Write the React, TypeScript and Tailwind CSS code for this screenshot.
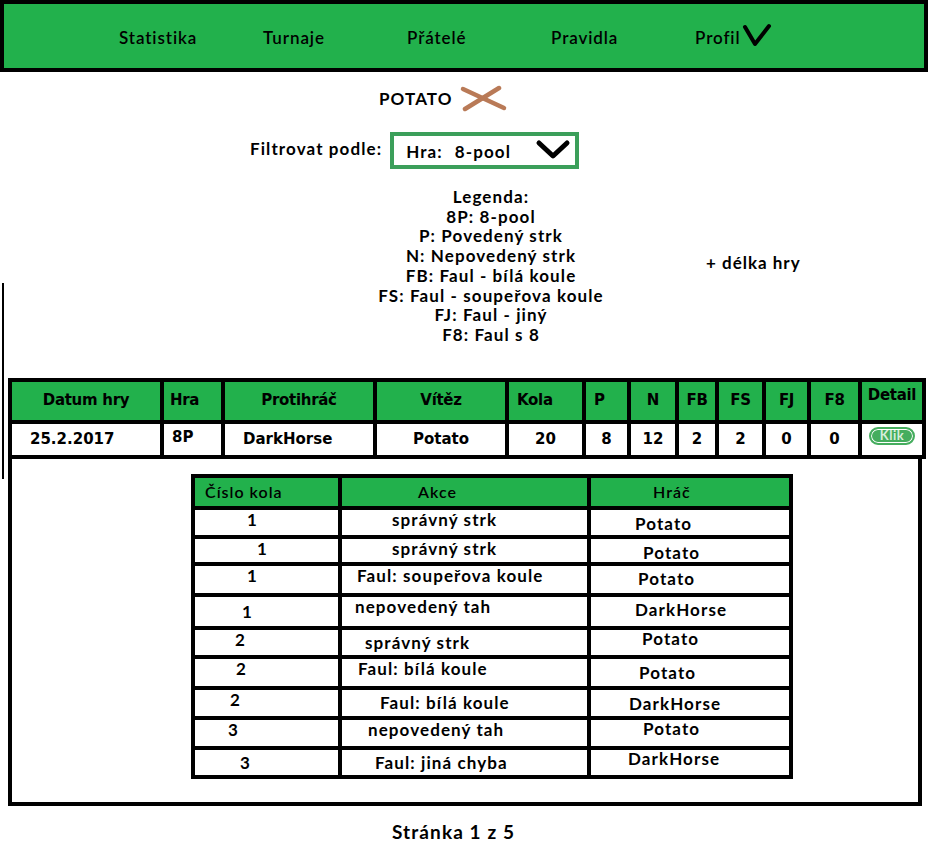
import React from "react";

const GREEN = "bg-[#22b14c]";

type NavItemProps = { title: string; chevron?: boolean };

function NavItem({ title, chevron }: NavItemProps) {
  return (
    <li className="w-[144px] flex items-center">
      <span>{title}</span>
      {chevron && (
        <svg width="30" height="26" viewBox="0 0 30 26" className="ml-[2px] -mt-[4px]">
          <polyline points="3,4 13,21 27,3" fill="none" stroke="black" strokeWidth="4" strokeLinejoin="round" strokeLinecap="round" />
        </svg>
      )}
    </li>
  );
}

function Navbar() {
  return (
    <nav className={`w-[928px] h-[72px] border-[4px] border-black ${GREEN}`}>
      <ul className="flex h-full items-center pl-[115px] pt-[4px] text-[17px] font-semibold text-black tracking-[0.9px]">
        <NavItem title="Statistika" />
        <NavItem title="Turnaje" />
        <NavItem title="Přátelé" />
        <NavItem title="Pravidla" />
        <NavItem title="Profil" chevron />
      </ul>
    </nav>
  );
}

const legend = [
  "Legenda:",
  "8P: 8-pool",
  "P: Povedený strk",
  "N: Nepovedený strk",
  "FB: Faul - bílá koule",
  "FS: Faul - soupeřova koule",
  "FJ: Faul - jiný",
  "F8: Faul s 8",
];

const headCols = [
  { t: "Datum hry", w: "w-[152px]", c: "text-center" },
  { t: "Hra", w: "w-[61px]", c: "text-left pl-[6px]" },
  { t: "Protihráč", w: "w-[152px]", c: "text-center" },
  { t: "Vítěz", w: "w-[132px]", c: "text-center" },
  { t: "Kola", w: "w-[77px]", c: "text-left pl-[8px]" },
  { t: "P", w: "w-[45px]", c: "text-left pl-[8px]" },
  { t: "N", w: "w-[48px]", c: "text-center" },
  { t: "FB", w: "w-[40px]", c: "text-center" },
  { t: "FS", w: "w-[47px]", c: "text-center" },
  { t: "FJ", w: "w-[45px]", c: "text-center" },
  { t: "F8", w: "w-[51px]", c: "text-center" },
];

const dataCols = [
  { t: "25.2.2017", c: "text-left pl-[18px]" },
  { t: "8P", c: "text-left pl-[8px] align-top pt-[2px]" },
  { t: "DarkHorse", c: "text-left pl-[18px]" },
  { t: "Potato", c: "text-center" },
  { t: "20", c: "text-center" },
  { t: "8", c: "text-center" },
  { t: "12", c: "text-center" },
  { t: "2", c: "text-center" },
  { t: "2", c: "text-center" },
  { t: "0", c: "text-center" },
  { t: "0", c: "text-center" },
];

const rounds = [
  { n: "1", nc: "pl-[52px]", a: "správný strk", ac: "pl-[50px]", h: "Potato", hc: "pl-[44px] pt-[5px]", row: "h-[29px]" },
  { n: "1", nc: "pl-[62px]", a: "správný strk", ac: "pl-[50px]", h: "Potato", hc: "pl-[52px] pt-[5px]", row: "h-[27px]" },
  { n: "1", nc: "pl-[52px]", a: "Faul: soupeřova koule", ac: "pl-[15px]", h: "Potato", hc: "pl-[47px] pt-[4px]", row: "h-[31px]" },
  { n: "1", nc: "pl-[47px] pt-[6px]", a: "nepovedený tah", ac: "pl-[13px]", h: "DarkHorse", hc: "pl-[44px] pt-[4px]", row: "h-[33px]" },
  { n: "2", nc: "pl-[40px]", a: "správný strk", ac: "pl-[23px] pt-[4px]", h: "Potato", hc: "pl-[51px]", row: "h-[29px]" },
  { n: "2", nc: "pl-[41px]", a: "Faul: bílá koule", ac: "pl-[16px]", h: "Potato", hc: "pl-[48px] pt-[5px]", row: "h-[31px]" },
  { n: "2", nc: "pl-[35px]", a: "Faul: bílá koule", ac: "pl-[38px] pt-[4px]", h: "DarkHorse", hc: "pl-[38px] pt-[5px]", row: "h-[30px]" },
  { n: "3", nc: "pl-[33px]", a: "nepovedený tah", ac: "pl-[26px]", h: "Potato", hc: "pl-[52px]", row: "h-[30px]" },
  { n: "3", nc: "pl-[45px] pt-[4px]", a: "Faul: jiná chyba", ac: "pl-[33px] pt-[4px]", h: "DarkHorse", hc: "pl-[37px]", row: "h-[29px]" },
];

function RoundsTable() {
  return (
    <table className="table-fixed border-collapse text-black font-['Lato',sans-serif]">
      <thead>
        <tr className={`h-[32px] ${GREEN} text-[16px]`}>
          <th className="w-[147px] border-4 border-black text-left pl-[10px] font-semibold tracking-[1px]">Číslo kola</th>
          <th className="w-[249px] border-4 border-black text-left pl-[76px] font-semibold tracking-[1px]">Akce</th>
          <th className="w-[202px] border-4 border-black text-left pl-[62px] font-semibold tracking-[1px]">Hráč</th>
        </tr>
      </thead>
      <tbody className="text-[17px] font-bold tracking-[1.1px]">
        {rounds.map((r, i) => (
          <tr key={i} className={r.row}>
            <td className={`border-4 border-black align-top pt-[1px] leading-[18px] ${r.nc}`}>{r.n}</td>
            <td className={`border-4 border-black align-top pt-[1px] leading-[18px] ${r.ac}`}>{r.a}</td>
            <td className={`border-4 border-black align-top leading-[18px] ${r.hc}`}>{r.h}</td>
          </tr>
        ))}
      </tbody>
    </table>
  );
}

function GameTable() {
  return (
    <table className="table-fixed border-collapse text-black font-['DejaVu_Sans',sans-serif]">
      <thead>
        <tr className={`h-[42px] text-[15px] ${GREEN}`}>
          {headCols.map((h, i) => (
            <th key={i} className={`${h.w} border-4 border-black font-bold tracking-[-0.3px] ${h.c}`}>
              {h.t}
            </th>
          ))}
          <th className="w-[64px] border-4 border-black font-bold tracking-[-0.3px] text-center align-top pt-[2px]">Detail</th>
        </tr>
      </thead>
      <tbody>
        <tr className="h-[35px] text-[15px] font-bold bg-white">
          {dataCols.map((d, i) => (
            <td key={i} className={`border-4 border-black ${d.c}`}>
              {d.t}
            </td>
          ))}
          <td className="border-4 border-black align-top pt-[3px]">
            <div className="mx-auto w-[46px] h-[18px] rounded-full bg-[#45ad5e] border-[2px] border-[#45ad5e] shadow-[inset_0_0_0_1px_white] flex items-center justify-center">
              <span className="text-[13px] font-bold text-[#d7eddc] font-['Lato',sans-serif] leading-none tracking-[0.5px]">Klik</span>
            </div>
          </td>
        </tr>
      </tbody>
    </table>
  );
}

export default function App() {
  return (
    <div className="relative w-[942px] h-[859px] bg-white overflow-hidden font-['Lato',sans-serif] text-black">
      <Navbar />

      <div className="flex items-center h-[28px] mt-[13px] pl-[379px]">
        <span className="text-[17px] font-bold tracking-[1.1px]">POTATO</span>
        <svg width="48" height="28" viewBox="0 0 48 28" className="ml-[7px]">
          <line x1="3" y1="4" x2="44" y2="23" stroke="#b97a57" strokeWidth="4.5" strokeLinecap="round" />
          <line x1="5" y1="24" x2="39" y2="3" stroke="#b97a57" strokeWidth="4.5" strokeLinecap="round" />
        </svg>
      </div>

      <div className="flex items-center h-[37px] mt-[19px] pl-[250px]">
        <span className="text-[17px] font-bold tracking-[1.1px] -mt-[4px]">Filtrovat podle:</span>
        <div className="ml-[8px] w-[189px] h-[37px] border-[4px] border-[#3b9f5a] flex items-center pl-[12px] pt-[2px] tracking-[1.1px]">
          <span className="text-[17px] font-bold">Hra:</span>
          <span className="text-[17px] font-bold ml-[12px]">8-pool</span>
          <svg width="36" height="22" viewBox="0 0 36 22" className="ml-auto mr-[4px] -mt-[3px]">
            <polyline points="4,4 18,17 32,4" fill="none" stroke="black" strokeWidth="5" strokeLinecap="round" strokeLinejoin="round" />
          </svg>
        </div>
      </div>

      <div className="flex mt-[18px]">
        <div className="w-[250px] ml-[366px] flex flex-col items-center text-[17px] font-bold leading-[19.7px] tracking-[1.1px]">
          {legend.map((l) => (
            <span key={l}>{l}</span>
          ))}
        </div>
        <span className="ml-[90px] mt-[63px] text-[17px] font-bold tracking-[1px]">+ délka hry</span>
      </div>

      <div className="absolute left-[2px] top-[283px] w-[2px] h-[196px] bg-black" />

      <div className="ml-[8px] mt-[33px]">
        <GameTable />
        <div className="w-[914px] h-[347px] border-4 border-t-0 border-black pt-[15px] pl-[179px]">
          <RoundsTable />
        </div>
      </div>

      <div className="pl-[392px] mt-[12px] text-[19px] font-bold tracking-[1.1px]">Stránka 1 z 5</div>
    </div>
  );
}
